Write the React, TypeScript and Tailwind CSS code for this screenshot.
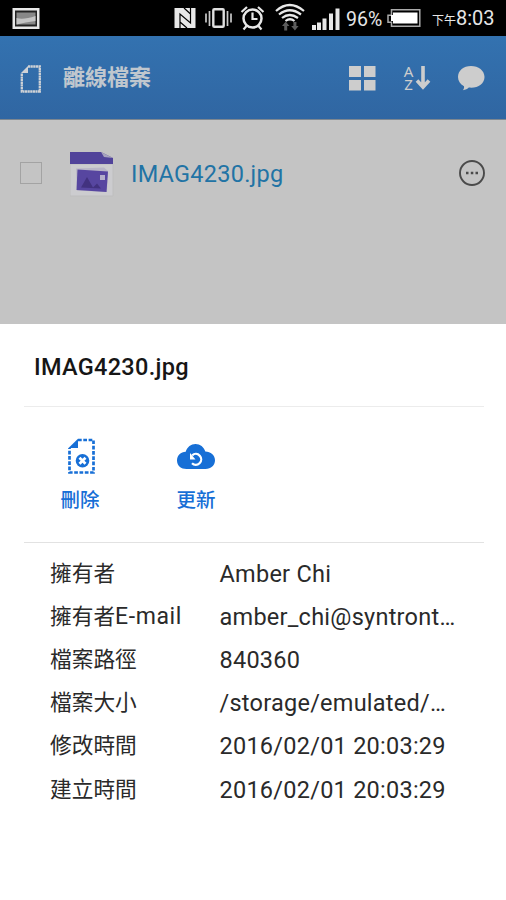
import type { ReactNode } from 'react'

const details = [
  { label: '擁有者', value: 'Amber Chi' },
  { label: '擁有者', suffix: 'E-mail', value: 'amber_chi@syntront…' },
  { label: '檔案路徑', value: '840360' },
  { label: '檔案大小', value: '/storage/emulated/…' },
  { label: '修改時間', value: '2016/02/01 20:03:29' },
  { label: '建立時間', value: '2016/02/01 20:03:29' },
]

function StatusBar() {
  return (
    <div className="flex h-9 shrink-0 items-center bg-black pl-3 text-[#e6e6e6]">
      <svg width="28" height="36" viewBox="0 0 28 36">
        <path d="M.5 8h27v21H.5z" fill="#e8e8e8" />
        <path d="M3 10.500h22v16H3z" fill="#222" />
        <path d="M4.500 12.500h19v12h-19z" fill="#888" />
        <path d="M4.500 18q7 2 19-2v5q-10 1-19 3.500z" fill="#c4c4c4" />
      </svg>
      <svg className="ml-[134px]" width="167" height="36" viewBox="174 0 167 36" fill="none">
        {/* NFC */}
        <path d="M174.500 8h21v20h-21z" fill="#e8e8e8" />
        <path d="M180 28V14l10.500 9V8M184 8l6.500 6M180 22l7 6" stroke="#000" strokeWidth="1.200" />
        {/* Vibrate */}
        <rect x="213.300" y="9.300" width="10.400" height="17.400" rx="1" stroke="#e0e0e0" strokeWidth="2.400" />
        <path d="M209.500 11v15M206 13.500v9M227.500 11v15M231 13.500v9" stroke="#c8c8c8" strokeWidth="1.700" />
        {/* Alarm */}
        <circle cx="252.500" cy="18.500" r="9" stroke="#e8e8e8" strokeWidth="2.500" />
        <path d="M252.500 12.500v6.500h5M246.500 26l-3 3.500M258.500 26l3 3.500M241.500 12l5.500-5M258 7l5.500 5" stroke="#e8e8e8" strokeWidth="2.200" />
        {/* Wi-Fi */}
        <path d="M276 11q13.500-12 28 0M279 14.500q10.500-8.500 22 0M282 18q7.500-6 16 0M285.500 21q4.500-3.500 9 0" stroke="#e8e8e8" strokeWidth="2.200" />
        <path d="M282 26l3.700-4.500 3.700 4.500h-2.200v4.500h-3V26zM291.200 26l3.700 4.500 3.700-4.500h-2.200v-4h-3v4z" fill="#5c5c5c" />
        {/* Signal */}
        <path d="M312 25h4v5h-4zM317 22.500h4V30h-4zM322.500 18.500h4V30h-4zM329 13.500h4V30h-4zM335.500 8.500h4V30h-4z" fill="#e8e8e8" />
      </svg>
      <span className="ml-[5px] w-[38px] pt-[3px] text-[19.500px] leading-9 whitespace-nowrap">96%</span>
      <svg className="ml-[3px]" width="35" height="36" viewBox="387 0 35 36" fill="none">
        <path d="M391.500 9.800h28.300v16.400h-28.300v-4h-3.500v-7h3.500z" stroke="#aaa" strokeWidth="1.500" />
        <path d="M393 12.500h24.500v11H393v-2.500h-2v-6h2z" fill="#fff" />
      </svg>
      <span className="ml-[10px] pt-0.5 leading-9 whitespace-nowrap">
        <span className="text-[12px]">下午</span>
        <span className="text-[20px]">8:03</span>
      </span>
    </div>
  )
}

function AppBar() {
  return (
    <header className="flex h-[84px] shrink-0 items-center border-b border-[#7e8790] bg-linear-to-b from-[#3372b0] to-[#3066a2] pr-[21px] pl-5 text-[#cdcdcd]">
      <svg width="22" height="28" viewBox="0 0 22 28" fill="none" className="mt-0.5">
        <path d="M8 1.500h11.800v25H1.800V8" stroke="#cfd2d6" strokeWidth="2.300" strokeDasharray="2.200 0.400" />
        <path d="M8 1v7H1z" fill="#cfd2d6" />
      </svg>
      <h1 className="ml-[21px] text-[22px] font-bold text-[#c0c7ce]">離線檔案</h1>
      <svg className="mt-px ml-auto" width="27" height="27" viewBox="0 0 27 27" fill="currentColor">
        <path d="M0 1h12v11H0zM15 1h11.500v11H15zM0 15h12v10.500H0zM15 15h11.500v10.500H15z" />
      </svg>
      <div className="mt-px ml-[26px] flex w-[29px] items-center">
        <div className="flex w-[13px] flex-col text-center font-['Noto_Sans'] text-[15px] leading-[13px]">
          <span className="h-[13px]">A</span>
          <span className="h-[13px]">Z</span>
        </div>
        <svg width="16" height="28" viewBox="13 0 16 28" fill="none" stroke="currentColor" strokeWidth="3.600">
          <path d="M21 2v20M15 16.500l6 6.500 6-6.500" />
        </svg>
      </div>
      <svg className="mt-px ml-[26px]" width="28" height="28" viewBox="0 0 28 28" fill="currentColor">
        <path d="M14 2C6.500 2 1 6.600 1 13c0 4 2.200 7.200 6 9.200.3 1.800-.3 3-1.200 4 2.800-.2 4.700-1.200 6-2.600C20.500 24.600 27.500 20 27.500 13 27.500 6.600 21.500 2 14 2z" />
      </svg>
    </header>
  )
}

function FileRow() {
  return (
    <div className="flex h-[106px] items-center px-5">
      <span className="size-[22px] border border-[#a3a3a3]" />
      <svg className="mt-px ml-7" width="45" height="46" viewBox="0 0 45 46">
        <path d="M0 13h43v32H0z" fill="#cccccf" stroke="#bebebe" />
        <path d="M0 1h31l12 6v6H0z" fill="#51439a" />
        <path d="M31 1l12 6-9-1z" fill="#a7a3be" />
        <path d="M6 17.500l28-1 4 3.500-1 21-30-1.500z" fill="#b9b6c7" />
        <path d="M7.500 18.500l30.500 2L36.500 41 6.500 39z" fill="#5746a0" />
        <path d="M11 36.500l6-10.500 6 10.500 4-4 4 5z" fill="#42327f" />
        <path d="M30 24h5v5h-5z" fill="#b4afca" />
      </svg>
      <span className="mt-1 ml-4 text-[23.500px] tracking-[0.250px] text-[#2173a5]">IMAG4230.jpg</span>
      <svg className="ml-auto" width="28" height="28" viewBox="0 0 28 28" fill="none">
        <circle cx="14" cy="14" r="12" stroke="#4a4a4a" strokeWidth="1.900" />
        <path d="M8 12.800h2.500v2.500H8zM12.800 12.800h2.500v2.500h-2.500zM17.500 12.800H20v2.500h-2.500z" fill="#4a4a4a" />
      </svg>
    </div>
  )
}

function Action({ label, children }: { label: string; children: ReactNode }) {
  return (
    <button className="flex w-[60px] flex-col items-center text-[#176fd6]">
      {children}
      <span className="mt-[11px] text-[19.500px] leading-7 font-medium">{label}</span>
    </button>
  )
}

export default function App() {
  return (
    <div className="flex h-[900px] w-[506px] flex-col overflow-hidden bg-[#c4c4c4] font-['Roboto','Noto_Sans_CJK_TC',sans-serif]">
      <StatusBar />
      <AppBar />
      <main className="h-[204px] shrink-0">
        <FileRow />
      </main>

      {/* Bottom sheet */}
      <section className="flex-1 bg-white pr-[22px] pl-6">
        <h2 className="h-[83px] border-b border-[#ececec] pl-[10px] text-[23.500px] leading-[87px] font-medium tracking-[0.300px] text-[#161616]">
          IMAG4230.jpg
        </h2>
        <div className="flex h-[136px] gap-[56px] border-b border-[#e2e2e2] pt-[31px] pl-[26px]">
          <Action label="刪除">
            <svg className="ml-[3px]" width="28" height="38" viewBox="0 0 28 38" fill="none" stroke="currentColor">
              <path d="M10 2h15.500v32.500h-24V10" strokeWidth="2.700" strokeDasharray="3.700 1.600" />
              <path d="M10 .7V10H.5z" fill="currentColor" stroke="none" />
              <circle cx="14.500" cy="22.800" r="6.800" fill="currentColor" stroke="none" />
              <path d="M11.500 19.800l6 6M17.500 19.800l-6 6" stroke="#fff" strokeWidth="2.700" />
            </svg>
          </Action>
          <Action label="更新">
            <svg width="38" height="38" viewBox="0 0 38 38" fill="none">
              <path d="M9.500 31C4 31 0 27.500 0 22.500s3.800-8.600 8.700-8.800C10.200 9 14 6 18.500 6S27 9.100 28.300 13.500c5.300 0 9.700 3.600 9.700 8.800S34 31 28.500 31z" fill="currentColor" />
              <path d="M15.200 17.300A5.400 5.400 0 1 1 15 25.200" stroke="#fff" strokeWidth="2.300" />
              <path d="M13 15l5.500 6.500H13z" fill="#fff" />
            </svg>
          </Action>
        </div>
        <dl className="pt-[9px] pl-[26px] text-[#2a2a2a]">
          {details.map((d) => (
            <div key={d.label + (d.suffix ?? '')} className="flex h-[43.100px] items-center whitespace-nowrap">
              <dt className="w-[169.500px] text-[21.700px] leading-[43px]">
                {d.label}
                {d.suffix && <span className="text-[23px] tracking-[0.600px]">{d.suffix}</span>}
              </dt>
              <dd className="pt-px text-[23.500px] leading-10 tracking-[0.250px]">{d.value}</dd>
            </div>
          ))}
        </dl>
      </section>
    </div>
  )
}
